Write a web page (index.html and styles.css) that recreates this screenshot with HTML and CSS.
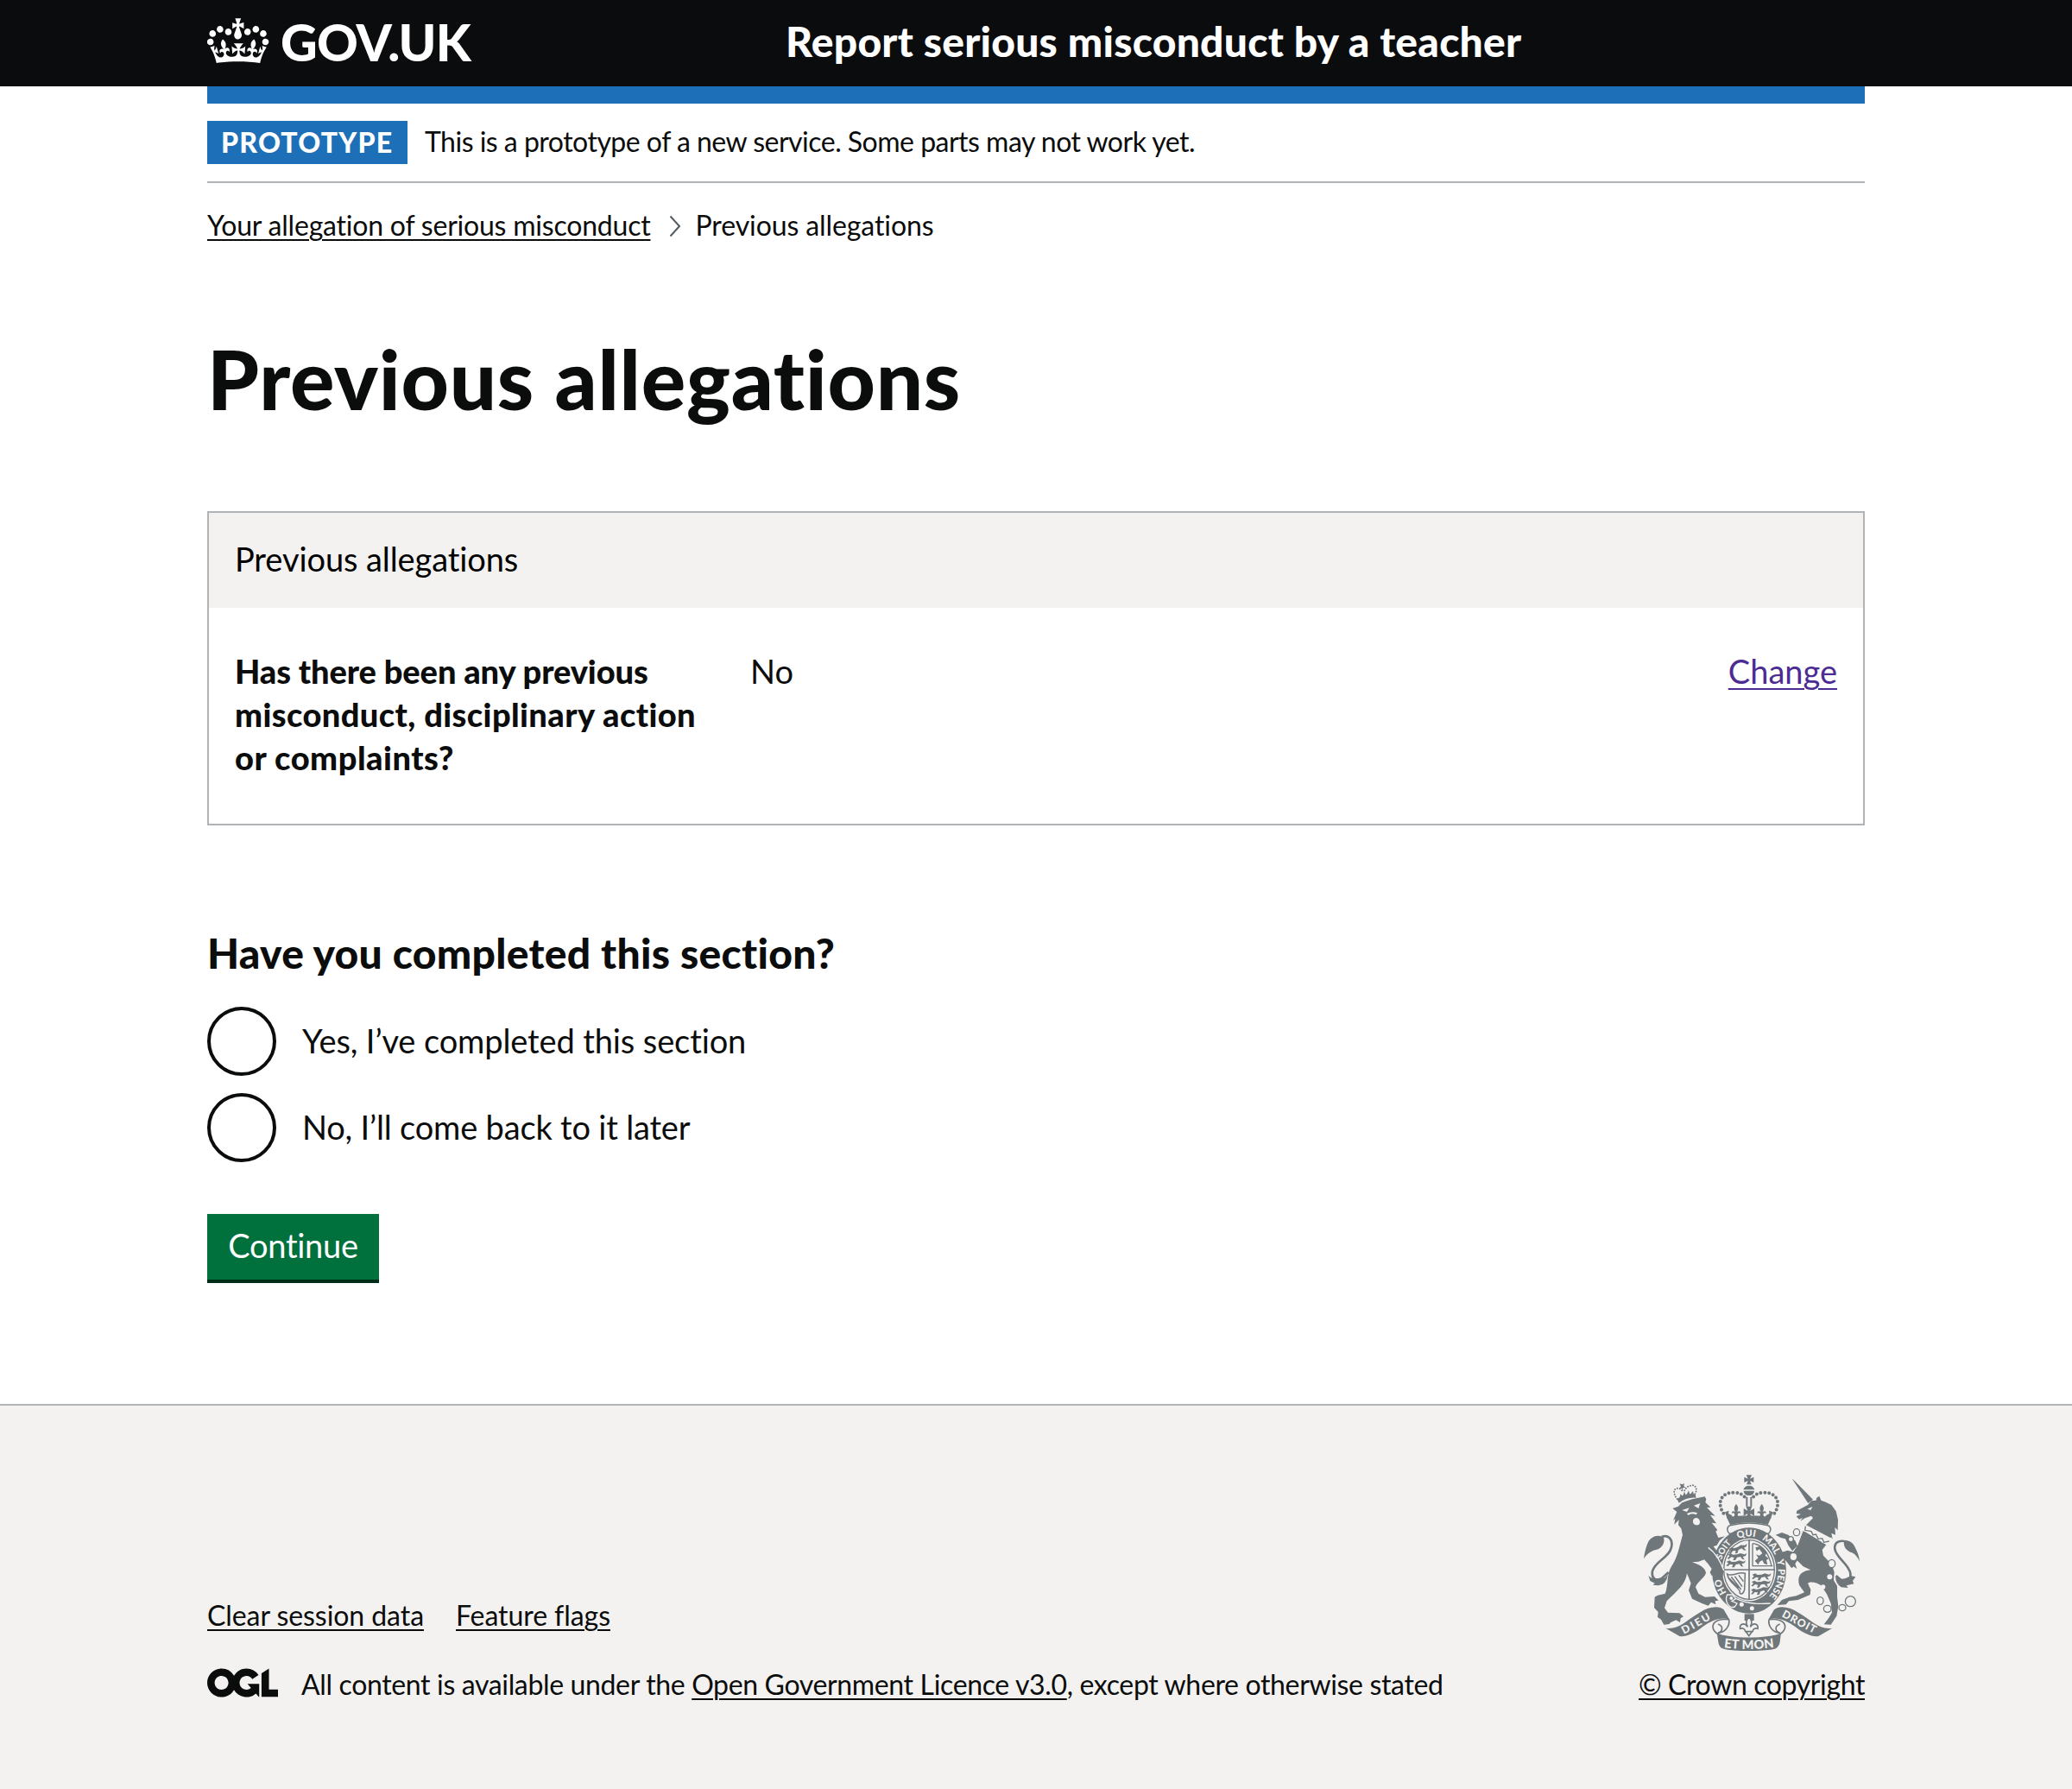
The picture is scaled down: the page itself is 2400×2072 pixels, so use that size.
FILE: index.html
```html
<!DOCTYPE html>
<html lang="en">
<head>
<meta charset="utf-8">
<title>Previous allegations - Report serious misconduct by a teacher</title>
<link rel="stylesheet" href="styles.css">
</head>
<body>
<header class="header">
  <div class="container header-row">
    <a class="logo" href="#">
      <svg class="logo-crown" viewBox="0 0 36 32" aria-hidden="true"><path fill="currentColor" d="M6.7 12.2c1 .4 2.1-.1 2.5-1s-.1-2.1-1-2.5c-1-.4-2.1.1-2.5 1-.4 1 0 2.1 1 2.5m-4.3 2.5c1 .4 2.1-.1 2.5-1s-.1-2.1-1-2.5c-1-.4-2.1.1-2.5 1-.5 1 0 2.1 1 2.5m-1.3 4.8c1 .4 2.1-.1 2.5-1 .4-1-.1-2.1-1-2.5-1-.4-2.1.1-2.5 1-.4 1 0 2.1 1 2.5m10.4-5.8c1 .4 2.1-.1 2.5-1s-.1-2.1-1-2.5c-1-.4-2.1.1-2.5 1s0 2.1 1 2.5m17.4-1.5c-1 .4-2.1-.1-2.5-1s.1-2.1 1-2.5c1-.4 2.1.1 2.5 1 .5 1 0 2.1-1 2.5m4.3 2.5c-1 .4-2.1-.1-2.5-1s.1-2.1 1-2.5c1-.4 2.1.1 2.5 1 .5 1 0 2.1-1 2.5m1.3 4.8c-1 .4-2.1-.1-2.5-1-.4-1 .1-2.1 1-2.5 1-.4 2.1.1 2.5 1 .4 1 0 2.1-1 2.5m-10.4-5.8c-1 .4-2.1-.1-2.5-1s.1-2.1 1-2.5c1-.4 2.1.1 2.5 1s0 2.1-1 2.5m-5.3-4.9 2.4 1.3V6.5l-2.4.8c-.1-.1-.1-.2-.2-.2s1-3 1-3h-3.4l1 3c-.1.1-.2.1-.2.2-.1.1-2.4-.7-2.4-.7v3.5L17 8.8c-.1.1 0 .2.1.3l-1.4 4.2c-.1.2-.1.4-.1.7 0 1.1.8 2.1 1.9 2.2h.6C19.2 16 20 15.1 20 14c0-.2 0-.4-.1-.7l-1.4-4.2c.2-.1.3-.2.3-.3m-1 20.3c4.6 0 8.9.3 12.8.9 1.1-4.6 2.4-7.2 3.8-9.1l-2.6-.9c.3 1.3.3 1.9 0 2.8-.4-.4-.8-1.2-1.1-2.4l-1.2 4.2c.8-.5 1.3-.9 2-.9-1.2 2.6-2.7 3.2-3.6 3-1.2-.2-1.7-1.3-1.5-2.2.3-1.3 1.6-1.6 2.2-.1 1.2-2.4-.8-3.1-2.1-2.4 1.9-1.9 2.2-3.6.6-5.7-2.2 1.7-2.2 3.3-1.2 5.6-1.3-1.5-3.3-.7-2.5 1.7.9-1.4 2.1-.5 2 .8-.2 1.2-1.7 2.1-3.7 2-2.8-.2-3-2.2-3-3.7.7-.1 1.9.5 3 2l.4-4.4c-1.1 1.2-2.2 1.4-3.3 1.4.4-1.2 2.1-3.1 2.1-3.1h-5.5s1.8 1.9 2.1 3.1c-1.1 0-2.2-.3-3.3-1.4l.4 4.4c1.1-1.5 2.3-2.1 3-2-.1 1.6-.2 3.5-3 3.7-1.9.2-3.5-.8-3.7-2-.2-1.3 1-2.2 1.9-.8.7-2.4-1.3-3.1-2.6-1.7 1-2.3.9-4-1.2-5.6-1.6 2.1-1.3 3.8.6 5.7-1.3-.7-3.2 0-2.1 2.4.6-1.4 1.8-1.1 2.2.1.2.9-.4 1.9-1.5 2.2-1 .2-2.4-.5-3.6-3 .6 0 1.2.4 2 .9l-1.2-4.2c-.3 1.2-.7 1.9-1.1 2.4-.3-.8-.3-1.4 0-2.8l-2.6.9c1.3 1.9 2.6 4.5 3.7 9.1 4-.6 8.3-.9 12.9-.9"/></svg>
      <span class="logo-text">GOV.UK</span>
    </a>
    <a class="service-name" href="#">Report serious misconduct by a teacher</a>
  </div>
</header>
<div class="container">
  <div class="header-bar"></div>
  <div class="phase-banner">
    <strong class="tag">PROTOTYPE</strong>
    <span class="phase-text">This is a prototype of a new service. Some parts may not work yet.</span>
  </div>
  <nav class="breadcrumbs">
    <a class="crumb-link" href="#">Your allegation of serious misconduct</a>
    <svg class="chevron" viewBox="0 0 14 26" aria-hidden="true"><path d="M1.5 1.5 12 13 1.5 24.500" fill="none" stroke="#505a5f" stroke-width="2"/></svg>
    <span class="crumb-current">Previous allegations</span>
  </nav>
  <main class="main">
    <h1 class="page-title">Previous allegations</h1>
    <section class="card">
      <h2 class="card-title">Previous allegations</h2>
      <dl class="card-row">
        <dt class="card-key"><span class="key-line-1">Has there been any previous</span><br><span class="key-line-2">misconduct, disciplinary action</span><br><span class="key-line-3">or complaints?</span></dt>
        <dd class="card-value">No</dd>
        <dd class="card-action"><a class="change-link" href="#">Change</a></dd>
      </dl>
    </section>
    <form class="form">
      <h2 class="question">Have you completed this section?</h2>
      <div class="radios">
        <label class="radio"><span class="radio-ring"></span><span class="radio-label yes">Yes, I’ve completed this section</span></label>
        <label class="radio"><span class="radio-ring"></span><span class="radio-label no">No, I’ll come back to it later</span></label>
      </div>
      <button class="button" type="button">Continue</button>
    </form>
  </main>
</div>
<footer class="footer">
  <div class="container footer-row">
    <div class="footer-meta">
      <div class="footer-links">
        <a class="footer-link" href="#">Clear session data</a>
        <a class="footer-link" href="#">Feature flags</a>
      </div>
      <div class="licence">
        <svg class="ogl" viewBox="0 0 483.2 195.7" aria-label="OGL"><path fill="currentColor" d="M421.5 142.800V.1l-50.700 32.300v161.100h112.400v-50.700zm-122.300-9.600A47.120 47.120 0 0 1 221 97.800c0-26 21.100-47.100 47.100-47.100 16.700 0 31.400 8.700 39.700 21.800l42.700-27.200A97.630 97.630 0 0 0 268.100 0c-36.500 0-68.300 20.100-85.100 49.700A98 98 0 0 0 97.800 0C43.900 0 0 43.900 0 97.800s43.900 97.800 97.800 97.800c36.500 0 68.300-20.100 85.100-49.700a97.760 97.760 0 0 0 149.600 25.400l19.400 22.200h3v-87.800h-80l24.300 27.500zM97.800 145c-26 0-47.100-21.100-47.100-47.100s21.100-47.100 47.100-47.100 47.100 21.100 47.100 47.100S123.800 145 97.800 145"/></svg>
        <span class="licence-text">All content is available under the <a class="footer-link" href="#">Open Government Licence v3.0</a>, except where otherwise stated</span>
      </div>
    </div>
    <div class="copyright">
      <svg class="crest" viewBox="72 53 750 612" aria-hidden="true">
        <defs>
          <path id="garter" d="M438 507A101 120 0 1 1 438.100 507" pathLength="100"/>
          <path id="ribbon-left" d="M212 607Q262 580 318 547"/>
          <path id="ribbon-right" d="M550 545Q606 576 672 609"/>
          <path id="ribbon-mid" d="M345 652Q437 666 530 652"/>
          <g id="arch" fill="none" stroke="#6f777b" stroke-linecap="round">
            <path d="M349 187C324 150 342 114 384 115 402 115 418 121 424 133" stroke-width="12" stroke-dasharray="0 14.500"/>
          </g>
          <g id="lily"><path d="M0-22C9-12 8-4 3 6 8 0 17 2 15 11 12 7 7 8 5 14L8 24H-8L-5 14C-7 8-12 7-15 11-17 2-8 0-3 6-8-4-9-12 0-22Z"/></g>
          <g id="beast"><path d="M2 4 12 0 20 5 34 4 46 0 60 4 68 0 64 9 54 12 60 22 52 20 46 12 34 14 28 24 20 24 24 15 14 13 6 20 0 18 8 10Z"/></g>
        </defs>
        <!-- central crown -->
        <g fill="#6f777b">
          <path d="M428 54H447L441 67 454 61V80L441 74 446 87H429L434 74 421 80V61L434 67Z"/>
          <path d="M418 105A20 18 0 0 1 457 105Z"/><path d="M419 109H456C455 119 448 125 437.500 125S420 119 419 109Z"/>
          <use href="#arch"/><use href="#arch" transform="matrix(-1 0 0 1 875 0)"/>
          <path d="M427 130H433V163H427ZM442 130H448V163H442Z"/>
          <use href="#lily" x="393" y="177"/><use href="#lily" x="482" y="177"/>
          <path d="M427 163H448L442 178 456 170V196L442 188 446 203H429L433 188 419 196V170L433 178Z"/>
          <path d="M354 183 368 178 366 188 378 194 382 205H362ZM521 183 507 178 509 188 497 194 493 205H513Z"/>
          <path d="M360 201Q437 188 515 201L503 227Q437 211 372 227Z"/>
        </g>
        <path d="M372 229Q437 213 503 229C516 234 515 250 505 258H370C360 250 359 234 372 229Z" fill="#f3f2f1" stroke="#6f777b" stroke-width="4.500"/>
        <!-- garter and shield -->
        <ellipse cx="438" cy="386" rx="129" ry="149" fill="#6f777b"/>
        <ellipse cx="438" cy="383" rx="94" ry="109" fill="#f3f2f1"/>
        <ellipse cx="438" cy="383" rx="88" ry="103" fill="none" stroke="#6f777b" stroke-width="4"/>
        <path d="M438 279V487M350 383H526" stroke="#6f777b" stroke-width="5"/>
        <g fill="#6f777b">
          <use href="#beast" x="366" y="300" transform="rotate(-14 400 310)"/><use href="#beast" x="362" y="326"/><use href="#beast" x="358" y="351"/>
          <use href="#beast" x="447" y="396"/><use href="#beast" x="445" y="421"/><use href="#beast" x="443" y="446" transform="rotate(-8 470 455)"/>
          <path d="M458 352 470 342 462 330 474 334 484 326 474 312 464 318 460 306 474 302 488 308 500 322 494 334 506 344 498 350 502 366 490 362 484 350 474 356 470 366Z"/>
        </g>
        <path d="M450 292V370H520M450 292Q500 298 516 370" fill="none" stroke="#6f777b" stroke-width="4"/>
        <path d="M362 398C380 410 400 388 424 396L422 452C416 474 402 468 406 458C394 436 368 430 362 398ZM376 408 410 452M388 406 414 442M402 402 418 424M370 414 402 446" fill="none" stroke="#6f777b" stroke-width="4.500"/>
        <!-- buckle and strap -->
        <path d="M362 470C352 490 366 520 388 512L396 500 378 492 392 484 380 470Z" fill="#6f777b" stroke="#f3f2f1" stroke-width="4"/>
        <path d="M394 484Q436 506 512 500" fill="none" stroke="#f3f2f1" stroke-width="4"/>
        <circle cx="376" cy="482" r="6" fill="#f3f2f1"/><circle cx="412" cy="504" r="7.500" fill="#f3f2f1"/><circle cx="448" cy="517" r="7.500" fill="#f3f2f1"/>
        <!-- lion -->
        <g fill="#6f777b">
          <path d="M188 138Q215 116 251 121L254 133Q222 130 194 151Z"/>
          <path d="M188 137C172 118 176 100 190 100 198 100 206 106 208 116M250 120C260 104 252 88 238 90 226 92 214 100 212 114" fill="none" stroke="#6f777b" stroke-width="6" stroke-linecap="round" stroke-dasharray="0 9"/>
          <path d="M197 84 206 87 213 83 211 93 217 98 207 99 208 108 203 100 195 101 201 94Z"/>
          <path d="M196 134 200 120 207 128 213 112 219 126 228 108 232 122 243 110 246 124Z"/>
          <path d="M172 170 192 163 205 150 240 138 284 129 289 138 286 149 304 166 291 167 320 196 303 193 324 222 308 220 328 245 322 250 331 272 354 267 336 281 326 298 314 302C330 322 346 350 345 372L350 384 346 410 337 402 326 414 318 408 318 400 308 404 302 392 308 380 295 362 282 348 262 355 240 357C268 366 286 378 288 394 282 414 256 426 252 444L262 466 285 478 318 476 332 490 320 492 322 504 306 496 296 508 274 500 240 484 228 454 236 430 222 396C218 432 190 455 152 492L144 516 156 532 196 534 210 546 200 552 198 566 184 558 166 566 160 572 142 574 132 556 120 548 122 530 108 515 110 478 120 472 146 466C158 440 150 400 168 372 190 340 196 300 207 262L202 240 192 228 194 210 178 226 181 206 174 212 187 182Z"/>
          <path d="M72 345C76 318 80 305 86 290 96 268 122 258 141 272 147 290 134 312 110 315 94 320 80 332 72 345Z"/>
          <path d="M134 269C158 260 174 278 168 305 160 342 112 352 102 388 98 412 112 424 134 414L158 392" fill="none" stroke="#6f777b" stroke-width="8"/>
          <path d="M88 403Q100 416 116 414L144 412 156 400Q150 436 122 438L104 436 110 430 94 422Z"/>
        </g>
        <path d="M205 176 230 168 222 182ZM246 160 268 152 262 170ZM222 188Q240 178 258 186L254 192Q238 184 226 194ZM243 212C246 200 262 200 266 212S262 230 254 228 242 222 243 212Z" fill="#f3f2f1"/>
        <path d="M296 306Q330 330 350 386" fill="none" stroke="#f3f2f1" stroke-width="4"/>
        <!-- unicorn -->
        <g fill="#6f777b">
          <path d="M588 68 592 70 660 139 643 152Z"/>
          <path d="M602 188 604 178 642 158 654 144 671 142 672 134 682 127 688 142 704 148 724 158 740 180 747 210 746 246 736 236 738 262 724 256 728 276 636 228 660 204 654 196 632 204 616 214 624 202 612 208 602 198 618 190Z"/>
          <path d="M626 247 706 296 692 314 696 334 726 366 734 392 732 420 744 440 744 478 748 510 742 544 722 574 698 573 714 552 726 532 722 500 708 468 688 438C672 424 648 424 642 430L652 452 650 470 608 488 576 492 566 504 536 506 552 488 578 478 602 474 630 462 612 436C604 404 618 388 652 384L626 372 604 350 586 330 608 296Z"/>
          <path d="M530 262 552 254 574 262 598 282 606 300 588 318 574 298 564 276 548 272Z"/>
          <path d="M552 322 572 316 600 324 606 350 598 362 604 380 592 372 586 378 566 352 556 346Z"/>
          <path d="M822 354C820 332 814 322 806 304 798 288 784 278 768 284 764 302 776 318 796 324 808 330 816 342 822 354Z"/>
          <path d="M784 288C758 278 732 284 736 312 742 344 784 362 790 396 792 420 780 430 764 424L740 404" fill="none" stroke="#6f777b" stroke-width="8"/>
          <path d="M738 406Q756 426 790 404L808 408 798 422 802 432 776 438 782 446 758 444Q738 430 738 406Z"/>
        </g>
        <g class="motto" font-size="33">
          <text><textPath href="#garter" startOffset="13.500">HO</textPath></text>
          <text font-size="30"><textPath href="#garter" startOffset="30.500">SOIT</textPath></text>
          <text><textPath href="#garter" startOffset="44.200">QUI</textPath></text>
          <text><textPath href="#garter" startOffset="56.500">MAL</textPath></text>
          <text><textPath href="#garter" startOffset="69.500">Y</textPath></text>
          <text><textPath href="#garter" startOffset="74">PENSE</textPath></text>
        </g>
        <path d="M640 172 658 164 652 176Z" fill="#f3f2f1"/>
        <path d="M624 238 710 294M636 230 632 246 652 244 656 258 668 252 674 270 688 262 694 284 720 276 716 296" fill="none" stroke="#f3f2f1" stroke-width="8"/>
        <path d="M634 232 632 246 654 250 660 262 670 260 678 276 692 274 698 288 716 284" fill="none" stroke="#6f777b" stroke-width="4"/>
        <g fill="#f3f2f1"><circle cx="718" cy="408" r="9"/><circle cx="695" cy="443" r="8"/></g>
        <g fill="#f3f2f1" stroke="#6f777b" stroke-width="4"><ellipse cx="603" cy="253" rx="11" ry="12"/><circle cx="583" cy="277" r="9"/><ellipse cx="592" cy="338" rx="13" ry="14"/><ellipse cx="725" cy="362" rx="12" ry="14"/><ellipse cx="685" cy="491" rx="11" ry="13"/><ellipse cx="710" cy="519" rx="13" ry="12"/><ellipse cx="762" cy="515" rx="12" ry="11"/><circle cx="790" cy="493" r="18"/></g>
        <!-- ribbon -->
        <g fill="none" stroke="#6f777b" stroke-width="5">
          <path d="M368 556C340 552 312 560 312 582 314 600 328 604 330 608M368 556C372 580 352 604 330 602 344 600 352 580 330 572"/>
          <path d="M507 556C535 552 563 560 563 582 561 600 547 604 545 608M507 556C503 580 523 604 545 602 531 600 523 580 545 572"/>
        </g>
        <g fill="#6f777b">
          <path id="band" d="M148 586C196 592 222 556 266 532 300 510 334 508 350 522L370 556C340 546 306 560 276 582 246 606 216 618 196 614Z"/>
          <use href="#band" transform="matrix(-1 0 0 1 875 0)"/>
          <path d="M326 602C360 624 515 624 549 602L545 634C540 656 530 658 510 661 460 667 410 667 364 661 344 658 334 654 331 634Z"/>
          <path d="M422 537H455V560H422Z"/>
        </g>
        <path d="M437.500 548C452 562 446 572 442 582 452 566 472 570 468 588 460 584 452 588 450 598H425C423 588 415 584 407 588 403 570 423 566 433 582 429 572 423 562 437.500 548ZM428 600 437.500 613 447 600" fill="#f3f2f1" stroke="#6f777b" stroke-width="5"/>
        <g class="motto" font-size="37">
          <text><textPath href="#ribbon-left" textLength="108">DIEU</textPath></text>
          <text><textPath href="#ribbon-right" textLength="128">DROIT</textPath></text>
          <text font-size="44"><textPath href="#ribbon-mid" startOffset="5" textLength="176">ET MON</textPath></text>
        </g>
      </svg>
      <a class="footer-link crown-link" href="#">© Crown copyright</a>
    </div>
  </div>
</footer>
</body>
</html>
```
FILE: styles.css
```css
* { box-sizing: border-box; }

body {
  margin: 0;
  background: #fff;
  color: #0b0c0c;
  font-family: Lato, "Liberation Sans", sans-serif;
  font-size: 32px;
  line-height: 40px;
  font-variant-ligatures: none;
}

a {
  color: inherit;
  text-decoration-thickness: 2px;
  text-underline-offset: 4px;
}

h1, h2, dl, dd { margin: 0; }

.container {
  width: 1920px;
  margin: 0 auto;
}

.header {
  background: #0b0c0e;
  color: #fff;
}

.header-row {
  display: flex;
  height: 100px;
}

.header a { text-decoration: none; }

.logo {
  display: flex;
  width: 670px;
}

.logo-crown {
  width: 72px;
  height: 64px;
  margin-top: 13px;
}

.logo-text {
  margin: 19px 0 0 13px;
  font-size: 59px;
  line-height: 60px;
  font-weight: 900;
  letter-spacing: -0.77px;
}

.service-name {
  margin-top: 18px;
  font-size: 48px;
  line-height: 60px;
  font-weight: 900;
  letter-spacing: 0.24px;
}

.header-bar {
  height: 20px;
  background: #1d70b8;
}

.phase-banner {
  display: flex;
  align-items: flex-start;
  gap: 20px;
  height: 92px;
  padding-top: 20px;
  border-bottom: 2px solid #b1b4b6;
}

.tag {
  width: 232px;
  height: 50px;
  padding-left: 16px;
  background: #1d70b8;
  color: #fff;
  line-height: 50px;
  font-weight: 900;
  letter-spacing: 1.2px;
}

.phase-text {
  padding-top: 4px;
  letter-spacing: -0.51px;
}

.breadcrumbs {
  display: flex;
  height: 40px;
  margin-top: 29px;
}

.crumb-link { letter-spacing: -0.21px; }

.chevron {
  width: 14px;
  height: 26px;
  margin: 8px 17px 0 21px;
}

.crumb-current { letter-spacing: -0.1px; }

.page-title {
  margin-top: 107px;
  font-size: 96px;
  line-height: 100px;
  font-weight: 900;
  letter-spacing: 0.74px;
}

.card {
  margin-top: 104px;
  border: 2px solid #b1b4b6;
  font-size: 38px;
  line-height: 50px;
}

.card-title {
  height: 110px;
  padding: 28px 30px;
  background: #f3f2f1;
  color: #000;
  font-size: 38px;
  font-weight: 400;
  letter-spacing: -0.09px;
}

.card-row {
  display: grid;
  grid-template-columns: 597px 1fr auto;
  height: 250px;
  padding: 48px 30px 0;
}

.card-key { font-weight: 900; }
.key-line-1 { letter-spacing: -0.1px; }
.key-line-2 { letter-spacing: 0.41px; }
.key-line-3 { letter-spacing: 0.52px; }

.change-link {
  color: #4c2c92;
  text-underline-offset: 5px;
}

.question {
  margin-top: 118px;
  font-size: 48px;
  line-height: 60px;
  font-weight: 900;
  letter-spacing: 0.28px;
}

.radios {
  display: flex;
  flex-direction: column;
  gap: 20px;
  margin-top: 32px;
}

.radio {
  display: flex;
  gap: 30px;
  font-size: 38px;
  line-height: 78px;
}

.radio-ring {
  width: 80px;
  height: 80px;
  border: 4px solid #0b0c0c;
  border-radius: 50%;
}

.yes { letter-spacing: -0.11px; }
.no { letter-spacing: -0.18px; }

.button {
  display: block;
  width: 199px;
  height: 76px;
  margin-top: 60px;
  padding: 0 0 4px;
  border: 0;
  background: #00703c;
  box-shadow: 0 4px 0 #002d18;
  color: #fff;
  font: 400 38px/72px Lato, "Liberation Sans", sans-serif;
  letter-spacing: -0.29px;
}

.footer {
  height: 446px;
  margin-top: 144px;
  border-top: 2px solid #b1b4b6;
  background: #f3f2f1;
}

.footer-row {
  display: flex;
  justify-content: space-between;
}

.footer-meta { padding-top: 223px; }

.footer-links {
  display: flex;
  gap: 37px;
  letter-spacing: -0.07px;
}

.licence {
  display: flex;
  margin-top: 40px;
}

.ogl {
  width: 82px;
  height: 34px;
  margin: 1px 27px 0 0;
}

.licence-text { letter-spacing: -0.35px; }

.copyright {
  display: flex;
  flex-direction: column;
  align-items: center;
  padding-top: 80px;
}

.crest {
  width: 250px;
  height: 204px;
}

.crown-link {
  margin-top: 19px;
  letter-spacing: -0.38px;
}

.motto {
  fill: #f3f2f1;
  font-family: Lato, sans-serif;
  font-weight: 900;
}
```
